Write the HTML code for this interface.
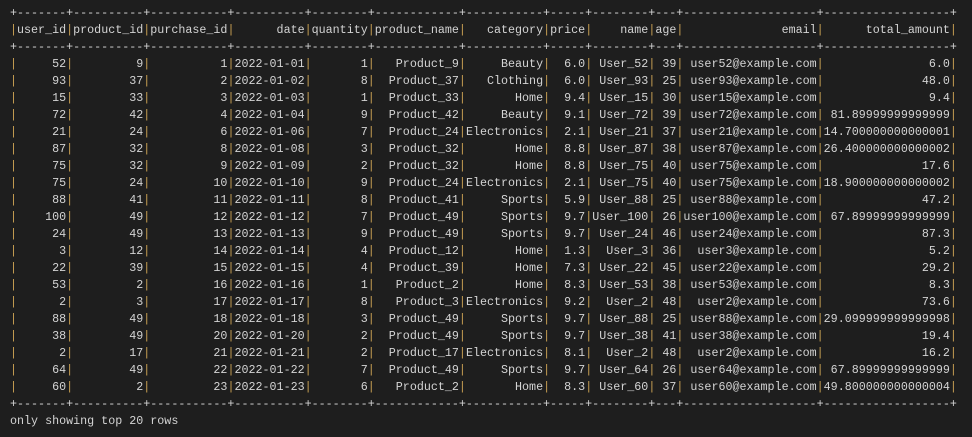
<!DOCTYPE html>
<html><head><meta charset="utf-8"><style>
html,body{margin:0;padding:0;background:#1e1e1e;width:972px;height:437px;overflow:hidden}
pre{margin:0;position:absolute;left:10px;top:5px;font-family:"Liberation Mono",monospace;font-size:11.69px;line-height:17px;color:#d4d4d4;white-space:pre}
b{font-weight:normal;color:#c9a053}
</style></head><body><pre>+-------+----------+-----------+----------+--------+------------+-----------+-----+--------+---+-------------------+------------------+
<b>|</b>user_id<b>|</b>product_id<b>|</b>purchase_id<b>|</b>      date<b>|</b>quantity<b>|</b>product_name<b>|</b>   category<b>|</b>price<b>|</b>    name<b>|</b>age<b>|</b>              email<b>|</b>      total_amount<b>|</b>
+-------+----------+-----------+----------+--------+------------+-----------+-----+--------+---+-------------------+------------------+
<b>|</b>     52<b>|</b>         9<b>|</b>          1<b>|</b>2022-01-01<b>|</b>       1<b>|</b>   Product_9<b>|</b>     Beauty<b>|</b>  6.0<b>|</b> User_52<b>|</b> 39<b>|</b> user52@example.com<b>|</b>               6.0<b>|</b>
<b>|</b>     93<b>|</b>        37<b>|</b>          2<b>|</b>2022-01-02<b>|</b>       8<b>|</b>  Product_37<b>|</b>   Clothing<b>|</b>  6.0<b>|</b> User_93<b>|</b> 25<b>|</b> user93@example.com<b>|</b>              48.0<b>|</b>
<b>|</b>     15<b>|</b>        33<b>|</b>          3<b>|</b>2022-01-03<b>|</b>       1<b>|</b>  Product_33<b>|</b>       Home<b>|</b>  9.4<b>|</b> User_15<b>|</b> 30<b>|</b> user15@example.com<b>|</b>               9.4<b>|</b>
<b>|</b>     72<b>|</b>        42<b>|</b>          4<b>|</b>2022-01-04<b>|</b>       9<b>|</b>  Product_42<b>|</b>     Beauty<b>|</b>  9.1<b>|</b> User_72<b>|</b> 39<b>|</b> user72@example.com<b>|</b> 81.89999999999999<b>|</b>
<b>|</b>     21<b>|</b>        24<b>|</b>          6<b>|</b>2022-01-06<b>|</b>       7<b>|</b>  Product_24<b>|</b>Electronics<b>|</b>  2.1<b>|</b> User_21<b>|</b> 37<b>|</b> user21@example.com<b>|</b>14.700000000000001<b>|</b>
<b>|</b>     87<b>|</b>        32<b>|</b>          8<b>|</b>2022-01-08<b>|</b>       3<b>|</b>  Product_32<b>|</b>       Home<b>|</b>  8.8<b>|</b> User_87<b>|</b> 38<b>|</b> user87@example.com<b>|</b>26.400000000000002<b>|</b>
<b>|</b>     75<b>|</b>        32<b>|</b>          9<b>|</b>2022-01-09<b>|</b>       2<b>|</b>  Product_32<b>|</b>       Home<b>|</b>  8.8<b>|</b> User_75<b>|</b> 40<b>|</b> user75@example.com<b>|</b>              17.6<b>|</b>
<b>|</b>     75<b>|</b>        24<b>|</b>         10<b>|</b>2022-01-10<b>|</b>       9<b>|</b>  Product_24<b>|</b>Electronics<b>|</b>  2.1<b>|</b> User_75<b>|</b> 40<b>|</b> user75@example.com<b>|</b>18.900000000000002<b>|</b>
<b>|</b>     88<b>|</b>        41<b>|</b>         11<b>|</b>2022-01-11<b>|</b>       8<b>|</b>  Product_41<b>|</b>     Sports<b>|</b>  5.9<b>|</b> User_88<b>|</b> 25<b>|</b> user88@example.com<b>|</b>              47.2<b>|</b>
<b>|</b>    100<b>|</b>        49<b>|</b>         12<b>|</b>2022-01-12<b>|</b>       7<b>|</b>  Product_49<b>|</b>     Sports<b>|</b>  9.7<b>|</b>User_100<b>|</b> 26<b>|</b>user100@example.com<b>|</b> 67.89999999999999<b>|</b>
<b>|</b>     24<b>|</b>        49<b>|</b>         13<b>|</b>2022-01-13<b>|</b>       9<b>|</b>  Product_49<b>|</b>     Sports<b>|</b>  9.7<b>|</b> User_24<b>|</b> 46<b>|</b> user24@example.com<b>|</b>              87.3<b>|</b>
<b>|</b>      3<b>|</b>        12<b>|</b>         14<b>|</b>2022-01-14<b>|</b>       4<b>|</b>  Product_12<b>|</b>       Home<b>|</b>  1.3<b>|</b>  User_3<b>|</b> 36<b>|</b>  user3@example.com<b>|</b>               5.2<b>|</b>
<b>|</b>     22<b>|</b>        39<b>|</b>         15<b>|</b>2022-01-15<b>|</b>       4<b>|</b>  Product_39<b>|</b>       Home<b>|</b>  7.3<b>|</b> User_22<b>|</b> 45<b>|</b> user22@example.com<b>|</b>              29.2<b>|</b>
<b>|</b>     53<b>|</b>         2<b>|</b>         16<b>|</b>2022-01-16<b>|</b>       1<b>|</b>   Product_2<b>|</b>       Home<b>|</b>  8.3<b>|</b> User_53<b>|</b> 38<b>|</b> user53@example.com<b>|</b>               8.3<b>|</b>
<b>|</b>      2<b>|</b>         3<b>|</b>         17<b>|</b>2022-01-17<b>|</b>       8<b>|</b>   Product_3<b>|</b>Electronics<b>|</b>  9.2<b>|</b>  User_2<b>|</b> 48<b>|</b>  user2@example.com<b>|</b>              73.6<b>|</b>
<b>|</b>     88<b>|</b>        49<b>|</b>         18<b>|</b>2022-01-18<b>|</b>       3<b>|</b>  Product_49<b>|</b>     Sports<b>|</b>  9.7<b>|</b> User_88<b>|</b> 25<b>|</b> user88@example.com<b>|</b>29.099999999999998<b>|</b>
<b>|</b>     38<b>|</b>        49<b>|</b>         20<b>|</b>2022-01-20<b>|</b>       2<b>|</b>  Product_49<b>|</b>     Sports<b>|</b>  9.7<b>|</b> User_38<b>|</b> 41<b>|</b> user38@example.com<b>|</b>              19.4<b>|</b>
<b>|</b>      2<b>|</b>        17<b>|</b>         21<b>|</b>2022-01-21<b>|</b>       2<b>|</b>  Product_17<b>|</b>Electronics<b>|</b>  8.1<b>|</b>  User_2<b>|</b> 48<b>|</b>  user2@example.com<b>|</b>              16.2<b>|</b>
<b>|</b>     64<b>|</b>        49<b>|</b>         22<b>|</b>2022-01-22<b>|</b>       7<b>|</b>  Product_49<b>|</b>     Sports<b>|</b>  9.7<b>|</b> User_64<b>|</b> 26<b>|</b> user64@example.com<b>|</b> 67.89999999999999<b>|</b>
<b>|</b>     60<b>|</b>         2<b>|</b>         23<b>|</b>2022-01-23<b>|</b>       6<b>|</b>   Product_2<b>|</b>       Home<b>|</b>  8.3<b>|</b> User_60<b>|</b> 37<b>|</b> user60@example.com<b>|</b>49.800000000000004<b>|</b>
+-------+----------+-----------+----------+--------+------------+-----------+-----+--------+---+-------------------+------------------+
only showing top 20 rows</pre></body></html>
